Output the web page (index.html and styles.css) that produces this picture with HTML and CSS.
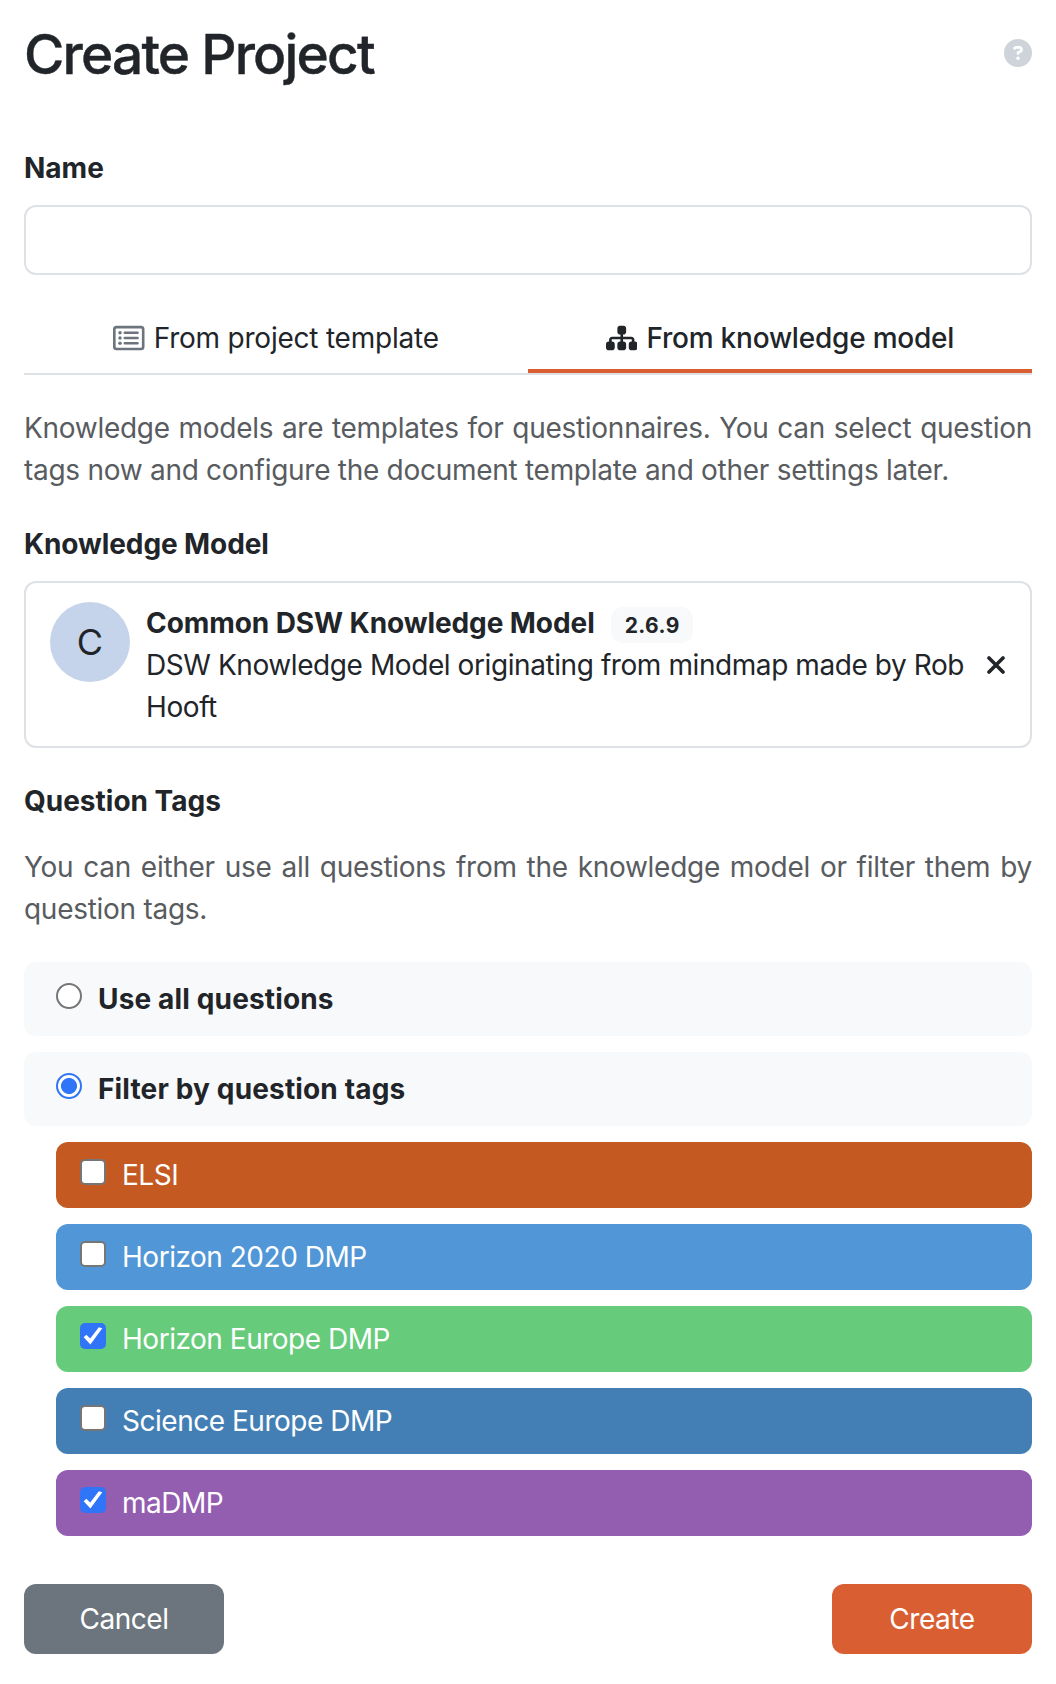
FILE: index.html
```html
<!DOCTYPE html>
<html lang="en">
<head>
<meta charset="utf-8">
<title>Create Project</title>
<link rel="stylesheet" href="styles.css">
</head>
<body>
<main class="page">
  <header class="header">
    <h2 class="title">Create Project</h2>
    <svg class="help" viewBox="0 0 512 512" aria-label="Help"><path d="M256 512A256 256 0 1 0 256 0a256 256 0 1 0 0 512zM169.8 165.3c7.9-22.3 29.1-37.3 52.8-37.3h58.3c34.9 0 63.1 28.3 63.1 63.1c0 22.6-12.1 43.5-31.7 54.8L280 264.4c-.2 13-10.9 23.6-24 23.6c-13.3 0-24-10.7-24-24V250.5c0-8.6 4.6-16.5 12.1-20.8l44.3-25.4c4.7-2.7 7.6-7.7 7.6-13.1c0-8.4-6.8-15.1-15.1-15.1H222.6c-3.4 0-6.4 2.1-7.5 5.3l-.4 1.2c-4.4 12.5-18.2 19-30.6 14.6s-19-18.2-14.6-30.6l.4-1.2zM224 352a32 32 0 1 1 64 0 32 32 0 1 1 -64 0z"/></svg>
  </header>

  <label class="label" for="name">Name</label>
  <input class="text-input" id="name" type="text">

  <nav class="tabs">
    <a class="tab">
      <svg class="tab-icon tab-icon-muted" viewBox="0 0 576 512">
        <rect class="line" x="24" y="56" width="528" height="400" rx="40"/>
        <path class="line" d="M216 160H448M216 256H448M216 352H448"/>
        <circle cx="128" cy="160" r="32"/><circle cx="128" cy="256" r="32"/><circle cx="128" cy="352" r="32"/>
      </svg>
      <span>From project template</span>
    </a>
    <a class="tab tab-active">
      <svg class="tab-icon" viewBox="0 0 576 512"><path d="M208 80c0-26.500 21.500-48 48-48h64c26.500 0 48 21.500 48 48v64c0 26.500-21.500 48-48 48h-8v40H464c30.900 0 56 25.100 56 56v32h8c26.500 0 48 21.500 48 48v64c0 26.500-21.500 48-48 48H464c-26.500 0-48-21.500-48-48V368c0-26.500 21.500-48 48-48h8V288c0-4.400-3.600-8-8-8H312v40h8c26.500 0 48 21.500 48 48v64c0 26.500-21.500 48-48 48H256c-26.500 0-48-21.500-48-48V368c0-26.500 21.500-48 48-48h8V280H112c-4.400 0-8 3.600-8 8v32h8c26.500 0 48 21.500 48 48v64c0 26.500-21.500 48-48 48H48c-26.500 0-48-21.500-48-48V368c0-26.500 21.500-48 48-48h8V288c0-30.900 25.100-56 56-56H264V192h-8c-26.500 0-48-21.500-48-48V80z"/></svg>
      <span>From knowledge model</span>
    </a>
  </nav>

  <p class="hint">Knowledge models are templates for questionnaires. You can select question tags now and configure the document template and other settings later.</p>

  <div class="label label-model">Knowledge Model</div>
  <div class="model">
    <div class="avatar">C</div>
    <div class="model-text">
      <div class="model-name"><strong>Common DSW Knowledge Model</strong><span class="badge">2.6.9</span></div>
      <div class="model-description">DSW Knowledge Model originating from mindmap made by Rob Hooft</div>
    </div>
    <svg class="clear" viewBox="0 0 18 18" aria-label="Clear"><path d="M2 2L16 16M16 2L2 16"/></svg>
  </div>

  <div class="label label-tags">Question Tags</div>
  <p class="hint hint-tags">You can either use all questions from the knowledge model or filter them by question tags.</p>

  <div class="options">
    <label class="option"><input class="radio" type="radio" name="mode"><span>Use all questions</span></label>
    <label class="option"><input class="radio" type="radio" name="mode" checked><span>Filter by question tags</span></label>
    <label class="tag tag-elsi"><input class="check" type="checkbox"><span>ELSI</span></label>
    <label class="tag tag-h2020"><input class="check" type="checkbox"><span>Horizon 2020 DMP</span></label>
    <label class="tag tag-horizon"><input class="check" type="checkbox" checked><span>Horizon Europe DMP</span></label>
    <label class="tag tag-science"><input class="check" type="checkbox"><span>Science Europe DMP</span></label>
    <label class="tag tag-madmp"><input class="check" type="checkbox" checked><span>maDMP</span></label>
  </div>

  <footer class="actions">
    <button class="btn btn-cancel" type="button">Cancel</button>
    <button class="btn btn-create" type="button">Create</button>
  </footer>
</main>
</body>
</html>
```
FILE: styles.css
```css
* { box-sizing: border-box; }

body {
  margin: 0;
  background: #fff;
  color: #212529;
  font: 400 28px/42px Inter, "Liberation Sans", sans-serif;
}

.page {
  display: flex;
  flex-direction: column;
  padding: 20px 24px 30px;
}

.header {
  display: flex;
  justify-content: space-between;
  align-items: flex-start;
  height: 67px;
  margin-bottom: 60px;
}
.title {
  margin: 1px 0 0;
  font-size: 55px;
  line-height: 67px;
  font-weight: 500;
  letter-spacing: -1.8px;
  -webkit-text-stroke: 0.4px currentColor;
}
.help { width: 28px; height: 28px; margin-top: 19px; fill: #ced4da; }

.label { display: block; font-weight: 700; margin-bottom: 16px; }
.label-model { letter-spacing: -0.1px; }

.text-input {
  height: 70px;
  padding: 12px 24px;
  border: 2px solid #dee2e6;
  border-radius: 12px;
  font: inherit;
  outline: none;
}

.tabs {
  display: flex;
  height: 84px;
  margin-top: 16px;
  border-bottom: 2px solid #dee2e6;
  letter-spacing: -0.22px;
}
.tab {
  flex: 1;
  display: flex;
  justify-content: center;
  align-items: center;
  gap: 9px;
  padding-top: 16px;
  border-bottom: 4px solid transparent;
}
.tab-active { border-bottom-color: #d95f33; font-weight: 500; }
.tab-icon { width: 31.5px; height: 28px; fill: currentColor; }
.tab-icon-muted { color: #6c757d; }
.line { fill: none; stroke: currentColor; stroke-width: 48; stroke-linecap: round; }

.hint {
  margin: 32px 0;
  color: #585c60;
  text-align: justify;
  letter-spacing: -0.28px;
}

.model {
  display: flex;
  gap: 16px;
  height: 167px;
  padding: 19px 24px 18px;
  border: 2px solid #dee2e6;
  border-radius: 12px;
}
.avatar {
  flex: none;
  width: 80px;
  height: 80px;
  border-radius: 50%;
  background: #c6d4eb;
  font-size: 36px;
  line-height: 80px;
  text-align: center;
}
.model-text { flex: 1; }
.model-name {
  display: flex;
  align-items: center;
  height: 42px;
  letter-spacing: -0.08px;
}
.model-description { letter-spacing: -0.42px; }
.badge {
  height: 36px;
  margin: 4px 0 0 16px;
  padding: 1px 13px 0 14px;
  border-radius: 12px;
  background: #f8f9fa;
  font-size: 21px;
  line-height: 36px;
  font-weight: 700;
  letter-spacing: 0.4px;
}
.clear {
  align-self: center;
  width: 18px;
  height: 18px;
  margin: 0 1px 0 -1px;
  fill: none;
  stroke: #212529;
  stroke-width: 3.6;
  stroke-linecap: round;
}

.label-tags { margin-top: 32px; }
.hint-tags { margin-top: 8px; }

.options { display: flex; flex-direction: column; gap: 16px; }
.option, .tag { display: flex; gap: 16px; border-radius: 12px; }
.option {
  height: 74px;
  padding: 16px 32px;
  background: #f8f9fa;
  font-weight: 700;
  letter-spacing: 0.15px;
}
.tag {
  height: 66px;
  margin-left: 32px;
  padding: 12px 24px;
  color: #fff;
  letter-spacing: -0.48px;
}
.tag-elsi { background: #c45a21; }
.tag-h2020 { background: #5196d6; }
.tag-horizon { background: #66cb7b; }
.tag-science { background: #437fb5; }
.tag-madmp { background: #935db0; }

.radio, .check {
  flex: none;
  appearance: none;
  width: 26px;
  height: 26px;
  margin: 5px 0 0;
  border: 2px solid #767676;
  background: #fff;
}
.radio { border-radius: 50%; }
.radio:checked {
  border-color: #3074f7;
  background: radial-gradient(circle, #3074f7 7.6px, #fff 8.4px);
}
.check { border-radius: 5px; }
.check:checked { border: 0; background: #3074f7; }
.check:checked::before {
  content: "";
  display: block;
  width: 26px;
  height: 26px;
  background: #fff;
  clip-path: polygon(3.7px 14.2px, 6.3px 11.8px, 10.2px 15.6px, 18.8px 4.3px, 22.3px 5.3px, 10.4px 21.5px);
}

.actions { display: flex; justify-content: space-between; margin-top: 48px; }
.btn {
  width: 200px;
  height: 70px;
  padding: 0;
  border: 0;
  border-radius: 12px;
  color: #fff;
  font: inherit;
  letter-spacing: -0.45px;
}
.btn-cancel { background: #6c757d; }
.btn-create { background: #d95f33; }
```
